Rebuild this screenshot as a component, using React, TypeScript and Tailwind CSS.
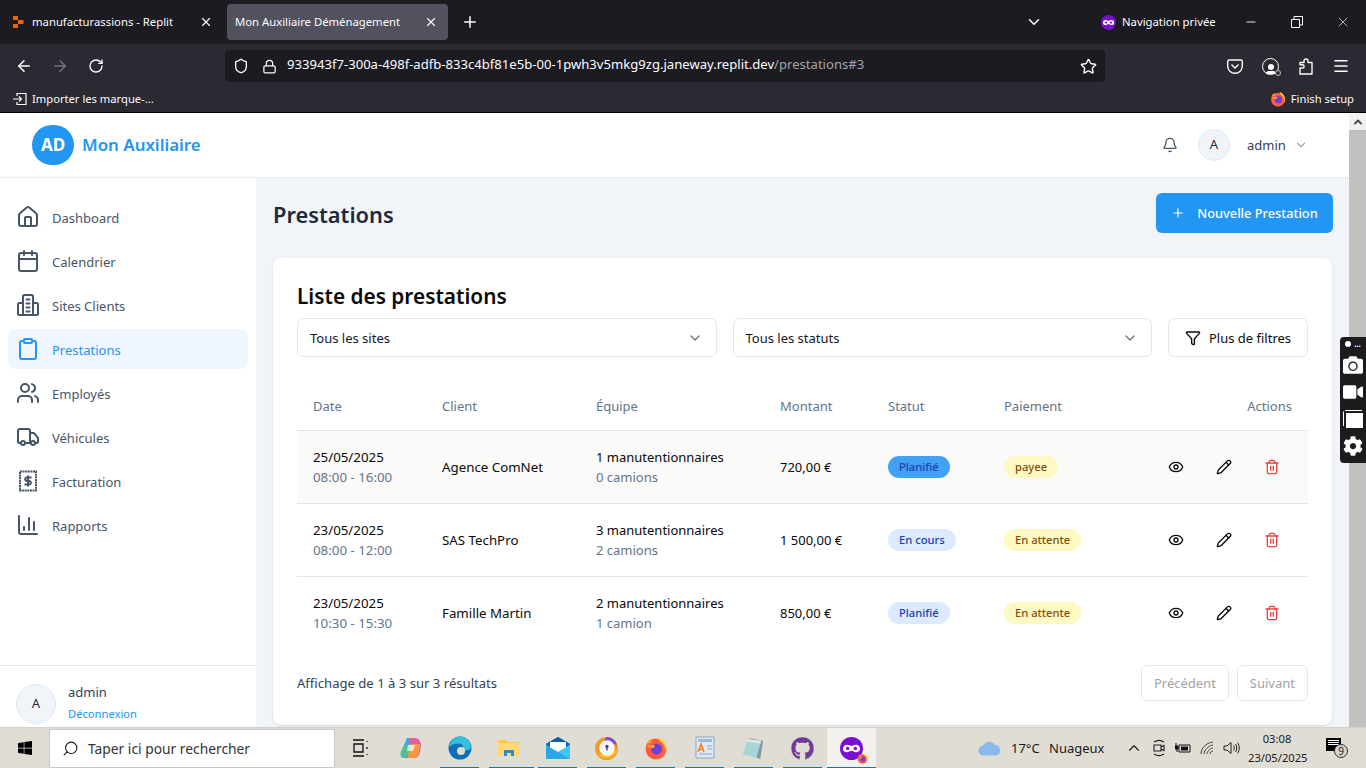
import React from 'react';
import {
  ArrowLeft, ArrowRight, Bell, Calendar, ChartColumn, ChevronDown, ChevronUp, Clipboard, Eye, Funnel,
  House, Lock, Menu, Minus, Pencil, Plus, RotateCw, Search, Shield, Star, Trash2, Truck, Users, X,
} from 'lucide-react';
import { FaWindows, FaGithub, FaCamera, FaVideo, FaCog } from 'react-icons/fa';

const BillIcon = () => (
  <svg width="24" height="24" viewBox="0 0 24 24" fill="none" stroke="currentColor" strokeWidth="2">
    <path d="M4 2.500h16v19H4z" strokeDasharray="2 0.6" />
    <path d="M15.500 8.500h-5a1.800 1.800 0 0 0 0 3.500h3a1.800 1.800 0 0 1 0 3.500H8.500M12 6.500v11" />
  </svg>
);

const SitesIcon = () => (
  <svg width="24" height="24" viewBox="0 0 24 24" fill="none" stroke="currentColor" strokeWidth="2" strokeLinejoin="round" strokeLinecap="round">
    <path d="M7 22V3.500A1.500 1.500 0 0 1 8.500 2h7A1.500 1.500 0 0 1 17 3.500V22" />
    <path d="M7 10H3.500A1.500 1.500 0 0 0 2 11.500V20.500A1.500 1.500 0 0 0 3.500 22h17a1.500 1.500 0 0 0 1.500-1.500v-9A1.500 1.500 0 0 0 20.500 10H17" />
    <path d="M10.500 6.500h3M10.500 10.500h3M10.500 14.500h3M10.500 18.500h3" />
  </svg>
);

const FoxIcon = ({ size = 20 }: { size?: number }) => (
  <svg width={size} height={size} viewBox="0 0 24 24">
    <circle cx="12" cy="13" r="10.5" fill="#ff5a3c" />
    <path d="M12 2.5c6 0 10.5 4.5 10.5 10.5 0 2-.5 3.5-1 4.5C22 11 18 4 12 2.5z" fill="#ffbd2e" />
    <path d="M2 9c1-3 3-5 5-6-.5 2 0 3 1 4H3.5z" fill="#ffa436" />
    <path d="M15 1c3 2 7 5 7.5 11-2-4-4-6-7-7 .5-1 .5-2.500-.5-4z" fill="#ffd43b" />
    <circle cx="12.500" cy="13" r="5.500" fill="#6e3fd6" />
    <path d="M3 9h8l-1 3H5z" fill="#ff9a2e" />
  </svg>
);

const MaskIcon = ({ size = 15 }: { size?: number }) => (
  <svg width={size} height={size} viewBox="0 0 24 24">
    <circle cx="12" cy="12" r="12" fill="#7a0fd1" />
    <path d="M7.500 8c1.700 0 3 1.200 4.500 1.200S14.800 8 16.500 8C19 8 21 10 21 12.300S19 16 16.800 16c-2 0-3-1.700-4.800-1.700S9.200 16 7.200 16C5 16 3 14.600 3 12.300S5 8 7.500 8z" fill="#fff" />
    <circle cx="8" cy="12" r="1.800" fill="#7a0fd1" />
    <circle cx="16" cy="12" r="1.800" fill="#7a0fd1" />
  </svg>
);

const ReplitIcon = () => (
  <svg width="11" height="12" viewBox="0 0 11 12" fill="#f26207">
    <path d="M0 0h5v4H0zM5 4h5.500v4H5zM0 8h5v4H0z" />
  </svg>
);

const navItems = [
  { label: 'Dashboard', icon: <House size={24} strokeWidth={2} /> },
  { label: 'Calendrier', icon: <Calendar size={24} strokeWidth={2} /> },
  { label: 'Sites Clients', icon: <SitesIcon /> },
  { label: 'Prestations', icon: <Clipboard size={24} strokeWidth={2} />, active: true },
  { label: 'Employés', icon: <Users size={24} strokeWidth={2} /> },
  { label: 'Véhicules', icon: <Truck size={24} strokeWidth={2} /> },
  { label: 'Facturation', icon: <BillIcon /> },
  { label: 'Rapports', icon: <ChartColumn size={24} strokeWidth={2} /> },
];

const rows = [
  { date: '25/05/2025', time: '08:00 - 16:00', client: 'Agence ComNet', team: '1 manutentionnaires', trucks: '0 camions', amount: '720,00 €', status: 'Planifié', pay: 'payee', highlight: true },
  { date: '23/05/2025', time: '08:00 - 12:00', client: 'SAS TechPro', team: '3 manutentionnaires', trucks: '2 camions', amount: '1 500,00 €', status: 'En cours', pay: 'En attente' },
  { date: '23/05/2025', time: '10:30 - 15:30', client: 'Famille Martin', team: '2 manutentionnaires', trucks: '1 camion', amount: '850,00 €', status: 'Planifié', pay: 'En attente' },
];

const gridCols = 'grid grid-cols-[129px_154px_184px_108px_116px_1fr]';

function BrowserChrome() {
  return (
    <div className="shrink-0 font-['Noto_Sans',sans-serif] text-[#fbfbfe]">
      {/* tabs */}
      <div className="h-11 bg-[#1c1b22] flex items-center">
        <div className="w-[220px] h-9 flex items-center pl-[13px] pr-[7px]">
          <ReplitIcon />
          <span className="ml-[8px] text-[11.3px] flex-1 whitespace-nowrap">manufacturassions - Replit</span>
          <X size={14} />
        </div>
        <div className="ml-[7px] w-[221px] h-9 bg-[#52525e] rounded flex items-center pl-2 pr-[10px]">
          <span className="text-[11.3px] flex-1 whitespace-nowrap">Mon Auxiliaire Déménagement</span>
          <X size={14} />
        </div>
        <Plus size={18} className="ml-[13px]" />
        <ChevronDown size={18} className="ml-[546px]" />
        <div className="ml-[58px] flex items-center gap-[6px]">
          <MaskIcon />
          <span className="text-[11.3px] w-[96px] whitespace-nowrap">Navigation privée</span>
        </div>
        <Minus size={14} strokeWidth={1.500} className="ml-[26px]" />
        <svg width="12" height="12" viewBox="0 0 12 12" fill="none" stroke="#fbfbfe" className="ml-[33px]">
          <path d="M.5 3.500h8v8h-8zM3 3.500v-3h8.500v8.500H8.500" />
        </svg>
        <X size={16} strokeWidth={1} className="ml-[32px]" />
      </div>
      {/* url bar */}
      <div className="h-11 bg-[#2b2a33] flex items-center">
        <ArrowLeft size={18} className="ml-[15px]" />
        <ArrowRight size={18} className="ml-[18px] text-[#75747c]" />
        <RotateCw size={16} className="ml-[19px]" />
        <div className="ml-[121px] w-[880px] h-8 bg-[#1c1b22] rounded flex items-center pl-2 pr-2">
          <Shield size={16} />
          <Lock size={15} className="ml-[13px]" />
          <span className="ml-[10px] -mt-[2px] text-[13.1px] flex-1 whitespace-nowrap">
            933943f7-300a-498f-adfb-833c4bf81e5b-00-1pwh3v5mkg9zg.janeway.replit.dev<span className="text-[#a3a3a8]">/prestations#3</span>
          </span>
          <Star size={17} />
        </div>
        <svg width="16" height="15" viewBox="0 0 16 15" fill="none" stroke="#fbfbfe" strokeWidth="1.400" className="ml-[122px]">
          <path d="M2 1h12a1.300 1.300 0 0 1 1.300 1.300V7a7.300 7.300 0 0 1-14.600 0V2.300A1.300 1.300 0 0 1 2 1z" />
          <path d="M4.500 5.500L8 9l3.500-3.500" />
        </svg>
        <div className="ml-[19px] relative w-[17px] h-[17px] rounded-full border-[1.500px] border-white flex flex-col items-center justify-end overflow-visible">
          <div className="w-[6px] h-[6px] rounded-full bg-white mb-px" />
          <div className="w-[10px] h-[3px] rounded-t-full bg-white" />
          <div className="absolute -right-[3px] -bottom-[2px] w-[6px] h-[6px] rounded-full bg-[#2b2a33] border border-[#bdbdc2]" />
        </div>
        <svg width="14" height="17" viewBox="0 0 14 17" fill="none" stroke="#fbfbfe" strokeWidth="1.400" className="ml-[20px]">
          <path d="M1 16V10h2.500a1.600 1.600 0 0 0 0-3.200H1V4.500h4V3a2 2 0 0 1 4 0v1.500h4V16z" strokeLinejoin="round" />
        </svg>
        <Menu size={18} className="ml-[19px]" />
      </div>
      {/* bookmarks */}
      <div className="h-6 bg-[#2b2a33] flex items-center justify-between pl-[13px] pr-3 border-b border-black box-content">
        <div className="flex items-center gap-[5px] -mt-[2px]">
          <svg width="14" height="14" viewBox="0 0 14 14" fill="none" stroke="#fbfbfe" strokeWidth="1.200">
            <path d="M4 4V1.500h9v11H4V10M0 7h8M6 4.500L8.500 7 6 9.500" />
          </svg>
          <span className="text-[11.2px] whitespace-nowrap">Importer les marque-...</span>
        </div>
        <div className="flex items-center gap-[5px] -mt-[2px]">
          <FoxIcon size={16} />
          <span className="text-[11.2px] whitespace-nowrap">Finish setup</span>
        </div>
      </div>
    </div>
  );
}

function AppHeader() {
  return (
    <header className="h-[65px] shrink-0 bg-white border-b border-[#e8edf3] flex items-center justify-between pl-8 pr-[41px]">
      <div className="flex items-center">
        <div className="w-[42px] h-10 rounded-full bg-[#2196f3] flex items-center justify-center text-white font-bold text-[17px]">AD</div>
        <span className="ml-2 text-[16.9px] font-semibold text-[#2196f3]">Mon Auxiliaire</span>
      </div>
      <div className="flex items-center">
        <Bell size={16} className="text-[#475569]" />
        <div className="ml-5 w-8 h-8 rounded-full bg-[#f1f5f9] border border-[#dbeafe] flex items-center justify-center text-[13px] text-[#1e293b]">A</div>
        <span className="ml-[17px] mt-[2px] w-[38px] text-[13px] text-[#334155]">admin</span>
        <ChevronDown size={14} className="ml-[9px] text-[#94a3b8]" />
      </div>
    </header>
  );
}

function Sidebar() {
  return (
    <aside className="w-64 shrink-0 bg-white flex flex-col justify-between">
      <nav className="pt-[19px] px-2 flex flex-col gap-1">
        {navItems.map((item) => (
          <div
            key={item.label}
            className={`h-10 flex items-center gap-3 pl-2 rounded-lg text-[13px] ${item.active ? 'bg-[#eff6ff] text-[#2196f3]' : 'text-[#475569]'}`}
          >
            <span className="w-6 h-6 flex items-center justify-center">{item.icon}</span>
            <span className="mt-[4px]">{item.label}</span>
          </div>
        ))}
      </nav>
      <div className="h-[62px] border-t border-[#e2e8f0] flex items-start pl-4 pt-[18px]">
        <div className="w-10 h-10 rounded-full bg-[#f1f5f9] border border-[#dbeafe] flex items-center justify-center text-[13px] text-[#1e293b]">A</div>
        <div className="ml-3 -mt-[2px]">
          <p className="text-[13px] leading-5 text-[#334155]">admin</p>
          <p className="mt-1 text-[11.2px] leading-4 text-[#2196f3]">Déconnexion</p>
        </div>
      </div>
    </aside>
  );
}

function Select({ label }: { label: string }) {
  return (
    <div className="flex-1 h-[39px] border border-[#e5e7eb] rounded-md flex items-center justify-between pl-3 pr-[13px] text-[13px] text-[#111827]">
      <span className="mt-[2px]">{label}</span>
      <ChevronDown size={16} className="text-[#737373]" />
    </div>
  );
}

function Badge({ label, tone }: { label: string; tone: string }) {
  return <span className={`inline-flex h-[22px] pt-px items-center px-[11px] rounded-full text-[11.2px] font-medium ${tone}`}>{label}</span>;
}

function PrestationsTable() {
  return (
    <div>
      <div className={`${gridCols} h-[50px] pt-[3px] items-center border-b border-[#e5e5e5] text-[13px] text-[#64748b]`}>
        <div className="pl-4">Date</div>
        <div className="pl-[16px]">Client</div>
        <div className="pl-[16px]">Équipe</div>
        <div className="pl-[16px]">Montant</div>
        <div className="pl-[16px]">Statut</div>
        <div className="pl-[16px] flex justify-between pr-4"><span>Paiement</span><span>Actions</span></div>
      </div>
      {rows.map((row, i) => (
        <div
          key={i}
          className={`${gridCols} h-[73px] items-center text-[13px] text-[#0a0a0a] border-b ${i < 2 ? 'border-[#e5e5e5]' : 'border-transparent'} ${row.highlight ? 'bg-[#fafaf8]' : ''}`}
        >
          <div className="pl-4 text-[13.3px]">
            <p className="leading-5">{row.date}</p>
            <p className="leading-5 text-[#64748b]">{row.time}</p>
          </div>
          <div className="pl-4 pt-[2px] text-[13.3px]">{row.client}</div>
          <div className="pl-4">
            <p className="leading-5">{row.team}</p>
            <p className="leading-5 text-[#64748b]">{row.trucks}</p>
          </div>
          <div className="pl-4 pt-[2px]">{row.amount}</div>
          <div className="pl-4">
            <Badge
              label={row.status}
              tone={row.highlight ? 'bg-[#42a0f5] text-[#1e40af]' : 'bg-[#dbeafe] text-[#1e40af]'}
            />
          </div>
          <div className="pl-4 flex items-center justify-between pr-[28px]">
            <Badge label={row.pay} tone="bg-[#fef9c3] text-[#854d0e]" />
            <div className="flex items-center gap-8">
              <Eye size={16} />
              <Pencil size={16} />
              <Trash2 size={16} className="text-[#ef4444]" />
            </div>
          </div>
        </div>
      ))}
    </div>
  );
}

function MainContent() {
  return (
    <main className="flex-1 bg-[#f1f5f9] pl-[17px] pr-[17px] pt-[15px] overflow-hidden">
      <div className="flex items-center justify-between h-10">
        <h1 className="mt-[4px] text-[21.8px] font-semibold text-[#1e293b]">Prestations</h1>
        <button className="-mr-px h-10 w-[177px] bg-[#2196f3] rounded-md flex items-center justify-center gap-[12px] text-[13px] font-medium text-white">
          <Plus size={14} />
          <span className="mt-[2px] text-[12.8px]">Nouvelle Prestation</span>
        </button>
      </div>
      <section className="mt-[25px] bg-white rounded-lg shadow-sm px-6 pt-[22px] pb-6 h-[467px]">
        <h2 className="text-[20.8px] leading-8 font-semibold text-[#0a0a0a]">Liste des prestations</h2>
        <div className="mt-[6px] flex gap-4">
          <Select label="Tous les sites" />
          <Select label="Tous les statuts" />
          <button className="w-[140px] h-[39px] border border-[#e5e7eb] rounded-md flex items-center justify-center gap-2 text-[13px] text-[#0a0a0a]">
            <Funnel size={16} />
            <span className="mt-[2px]">Plus de filtres</span>
          </button>
        </div>
        <div className="mt-[24px]">
          <PrestationsTable />
        </div>
        <div className="mt-[15px] flex items-center justify-between">
          <span className="mt-[2px] text-[13.1px] text-[#334155]">Affichage de 1 à 3 sur 3 résultats</span>
          <div className="flex gap-2">
            <button className="h-9 px-3 pt-[2px] border border-[#e5e7eb] rounded-md text-[13px] text-[#a3a3a3]">Précédent</button>
            <button className="h-9 px-3 pt-[2px] border border-[#e5e7eb] rounded-md text-[13px] text-[#a3a3a3]">Suivant</button>
          </div>
        </div>
      </section>
    </main>
  );
}

function Scrollbar() {
  return (
    <div className="w-[17px] shrink-0 bg-[#f1f1f1] flex flex-col">
      <div className="h-[17px] flex items-center justify-center">
        <ChevronUp size={12} strokeWidth={4} className="text-[#505050]" />
      </div>
      <div className="flex-1 bg-[#c1c1c1]" />
    </div>
  );
}

function TaskSlot({ children, active, wide, idle }: { children: React.ReactNode; active?: boolean; wide?: boolean; idle?: boolean }) {
  return (
    <div className={`w-[49px] h-[41px] flex items-center justify-center relative ${active ? 'bg-[#f3f1ed]' : ''}`}>
      {children}
      {!idle && <div className={`absolute bottom-0 h-[2px] bg-[#0078d4] ${active ? 'inset-x-0' : wide ? 'left-[5px] right-[-1px]' : 'inset-x-[5px]'}`} />}
    </div>
  );
}

function Taskbar() {
  return (
    <div className="h-[41px] shrink-0 bg-[#e0ddd5] flex items-center text-[#1a1a1a] font-['Noto_Sans',sans-serif] border-t border-[#d4d2cc]">
      <div className="w-[49px] flex items-center justify-center"><FaWindows size={16} className="text-black" /></div>
      <div className="w-[286px] h-[39px] bg-white border border-[#c8c8c8] flex items-center pl-3">
        <Search size={17} strokeWidth={1.500} className="-scale-x-100" />
        <span className="ml-[9px] mt-[2px] text-[13.8px] text-[#333]">Taper ici pour rechercher</span>
      </div>
      <div className="w-[51px] flex justify-center">
        <svg width="18" height="18" viewBox="0 0 18 18" fill="none" stroke="#111" strokeWidth="1.300">
          <path d="M1 1h11M1 17h11M2 5h9v8H2zM15 2v1M15 8v2M15 15v1" />
        </svg>
      </div>
      <TaskSlot idle>
        <svg width="24" height="24" viewBox="0 0 24 24">
          <path d="M8 2h6l-5 20H5C2 22 1 19 2 16z" fill="#3ba7f0" />
          <path d="M10 2h6c3 0 5 2 6 6l-1 8c-1 4-3 6-6 6H9z" fill="#e85ba6" />
          <path d="M10 8h11l-1 8c-1 4-3 6-6 6H9z" fill="#f59a42" />
          <path d="M4 12c2-3 5-4 8-4l-2 8c-1 3-3 5-5 6-3 0-4-3-3-6z" fill="#4cc38a" />
          <path d="M9 9h7l-2 6H8z" fill="#fff" opacity="0.7" />
        </svg>
      </TaskSlot>
      <TaskSlot>
        <svg width="24" height="24" viewBox="0 0 24 24">
          <circle cx="12" cy="12" r="11.500" fill="#0c6fb8" />
          <path d="M1 11C2 4 7 .5 12 .5c6 0 11 5 11 10 0 3-3 4-6 4-2 0-3-1-3-2 2-1 1-5-3-5-4 0-8 1-10 3.500z" fill="#35c1d8" />
          <circle cx="13" cy="15" r="4" fill="#e0ddd5" />
        </svg>
      </TaskSlot>
      <TaskSlot wide>
        <svg width="22" height="20" viewBox="0 0 22 20">
          <path d="M0 2h8l2 2h12v14H0z" fill="#ffc83d" />
          <path d="M0 5h22v13H0z" fill="#ffd978" />
          <path d="M6 18v-6h10v6h-3v-3H9v3z" fill="#2b88d8" />
        </svg>
      </TaskSlot>
      <TaskSlot>
        <svg width="24" height="24" viewBox="0 0 24 24">
          <path d="M0 8l12-7 12 7v15H0z" fill="#1490df" />
          <path d="M0 8l12-7 12 7-12 7z" fill="#0a5ea8" />
          <path d="M4 6h16v7l-8 4-8-4z" fill="#fff" />
          <path d="M0 9l12 7 12-7v14H0z" fill="#28a8ea" />
          <path d="M12 16l12-7v14z" fill="#50d9ff" opacity="0.6" />
        </svg>
      </TaskSlot>
      <TaskSlot>
        <svg width="23" height="23" viewBox="0 0 24 24">
          <circle cx="12" cy="12" r="12" fill="#f59a23" />
          <path d="M12 0a12 12 0 0 1 11 8L8 6z" fill="#7d4fd0" />
          <path d="M3 18a12 12 0 0 0 20-4L14 18z" fill="#ffc72c" />
          <circle cx="12.500" cy="11.500" r="8" fill="#fff" />
          <path d="M12.500 5l5 2v4c0 3-2 5-5 7-3-2-5-4-5-7V7z" fill="#fff" stroke="#ddd" strokeWidth="0.500" />
          <circle cx="12.500" cy="10" r="1.800" fill="#4b3f8f" />
          <path d="M11.700 11h1.600v3h-1.600z" fill="#4b3f8f" />
        </svg>
      </TaskSlot>
      <TaskSlot><FoxIcon size={24} /></TaskSlot>
      <TaskSlot>
        <svg width="20" height="24" viewBox="0 0 20 24">
          <path d="M1 1h18v21H1z" fill="#dfe9f5" stroke="#8aa4c4" />
          <path d="M3 3h14v3H3z" fill="#9db9d9" />
          <path d="M12 10h5M12 13h5M4 18h13" stroke="#8aa4c4" />
          <path d="M3 16l3-8 3 8M4 13.500h4" stroke="#f57c1f" strokeWidth="1.500" fill="none" />
        </svg>
      </TaskSlot>
      <TaskSlot>
        <svg width="23" height="23" viewBox="0 0 24 24">
          <path d="M7 1l15 3-3 19-3-1z" fill="#7d9a9e" />
          <path d="M6 2l14 2-5 18-14-4z" fill="#a8d5d8" />
          <path d="M6 2l14 2-1 3-14-2z" fill="#dce9e4" />
        </svg>
      </TaskSlot>
      <TaskSlot>
        <div className="w-[23px] h-[23px] rounded-full bg-[#7b3fa0] flex items-center justify-center">
          <FaGithub size={23} className="text-[#6e3a96] bg-[#e0ddd5] rounded-full" />
        </div>
      </TaskSlot>
      <TaskSlot active>
        <div className="relative">
          <MaskIcon size={23} />
          <div className="absolute -right-[5px] -bottom-[4px]"><FoxIcon size={11} /></div>
        </div>
      </TaskSlot>
      <div className="ml-[102px] flex items-center">
        <svg width="24" height="16" viewBox="0 0 24 16">
          <path d="M6 15.500a5 5 0 0 1-1-10A7 7 0 0 1 17 5a5.300 5.300 0 0 1 1 10.500z" fill="#8cb9ec" />
        </svg>
        <span className="ml-[9px] mt-[2px] w-[29px] text-[13px] whitespace-nowrap">17°C</span>
        <span className="ml-[9px] mt-[2px] w-[56px] text-[13px] whitespace-nowrap">Nuageux</span>
        <ChevronUp size={18} strokeWidth={1.500} className="ml-[20px]" />
        <svg width="14" height="18" viewBox="0 0 14 18" fill="none" stroke="#222" strokeWidth="1.100" className="ml-[9px]">
          <path d="M2 3c3-2 7-2 10 0M2 15c3 2 7 2 10 0M2 6h7v6H2zM9 8l3-1.500v5L9 10" />
        </svg>
        <svg width="16" height="12" viewBox="0 0 16 12" className="ml-[9px]">
          <path d="M4 3h11v7H4z" fill="none" stroke="#111" /><path d="M6 4.500h7v4H6z" fill="#111" /><path d="M0 4h3v3H0zM1 1v3M2 7v3" fill="#111" stroke="#111" />
        </svg>
        <svg width="16" height="14" viewBox="0 0 16 14" fill="none" stroke="#444" className="ml-[9px]">
          <path d="M1 13C1 7 6 2 13 1M4 13c0-4 4-8 9-9M7 13c0-2 2-5 6-6M10 13c0-1 1-3 3-3" />
        </svg>
        <svg width="17" height="14" viewBox="0 0 17 14" fill="none" stroke="#222" className="ml-[7px]">
          <path d="M1 5h3l4-3.500v11L4 9H1zM10.500 4.500c1 1.500 1 3.500 0 5M12.500 3c1.700 2.500 1.700 5.500 0 8M14.500 1.500c2.300 3.500 2.300 7.500 0 11" />
        </svg>
        <div className="ml-[8px] w-[58px] text-center text-[11.2px] leading-[19px] whitespace-nowrap">
          <p>03:08</p>
          <p>23/05/2025</p>
        </div>
        <div className="ml-[20px] relative w-[22px] h-[20px]">
          <div className="absolute left-0 top-0 w-[15px] h-[13px] bg-black flex flex-col gap-px px-[2px] pt-[2px]">
            <div className="h-px bg-white" /><div className="h-px bg-white" /><div className="h-px bg-white" />
          </div>
          <div className="absolute right-0 bottom-0 w-[14px] h-[14px] rounded-full bg-[#d6d4ce] border border-[#333] text-[10px] leading-[12px] text-center">9</div>
        </div>
      </div>
    </div>
  );
}

function RecorderWidget() {
  return (
    <div className="absolute left-[1340px] top-[337px] w-[26px] h-[126px] bg-[#1c1c1c] rounded-l flex flex-col items-center text-white pt-[3px] gap-[7px]">
      <div className="flex items-center gap-[3px] h-[8px]">
        <div className="w-[6px] h-[6px] rounded-full bg-white" />
        <span className="text-[8px] leading-[8px] font-bold">...</span>
      </div>
      <FaCamera size={20} />
      <FaVideo size={20} />
      <svg width="20" height="20" viewBox="0 0 20 20" fill="white">
        <path d="M2 1h17v1H2zM0 2.500h1V17H0z" />
        <path d="M3 4h17v15H3z" />
      </svg>
      <FaCog size={20} />
    </div>
  );
}

export default function App() {
  return (
    <div className="relative w-[1366px] h-[768px] overflow-hidden flex flex-col font-['Noto_Sans',sans-serif]">
      <BrowserChrome />
      <div className="flex-1 min-h-0 flex">
        <div className="flex-1 min-w-0 flex flex-col">
          <AppHeader />
          <div className="flex-1 min-h-0 flex">
            <Sidebar />
            <MainContent />
          </div>
        </div>
        <Scrollbar />
      </div>
      <Taskbar />
      <RecorderWidget />
    </div>
  );
}
